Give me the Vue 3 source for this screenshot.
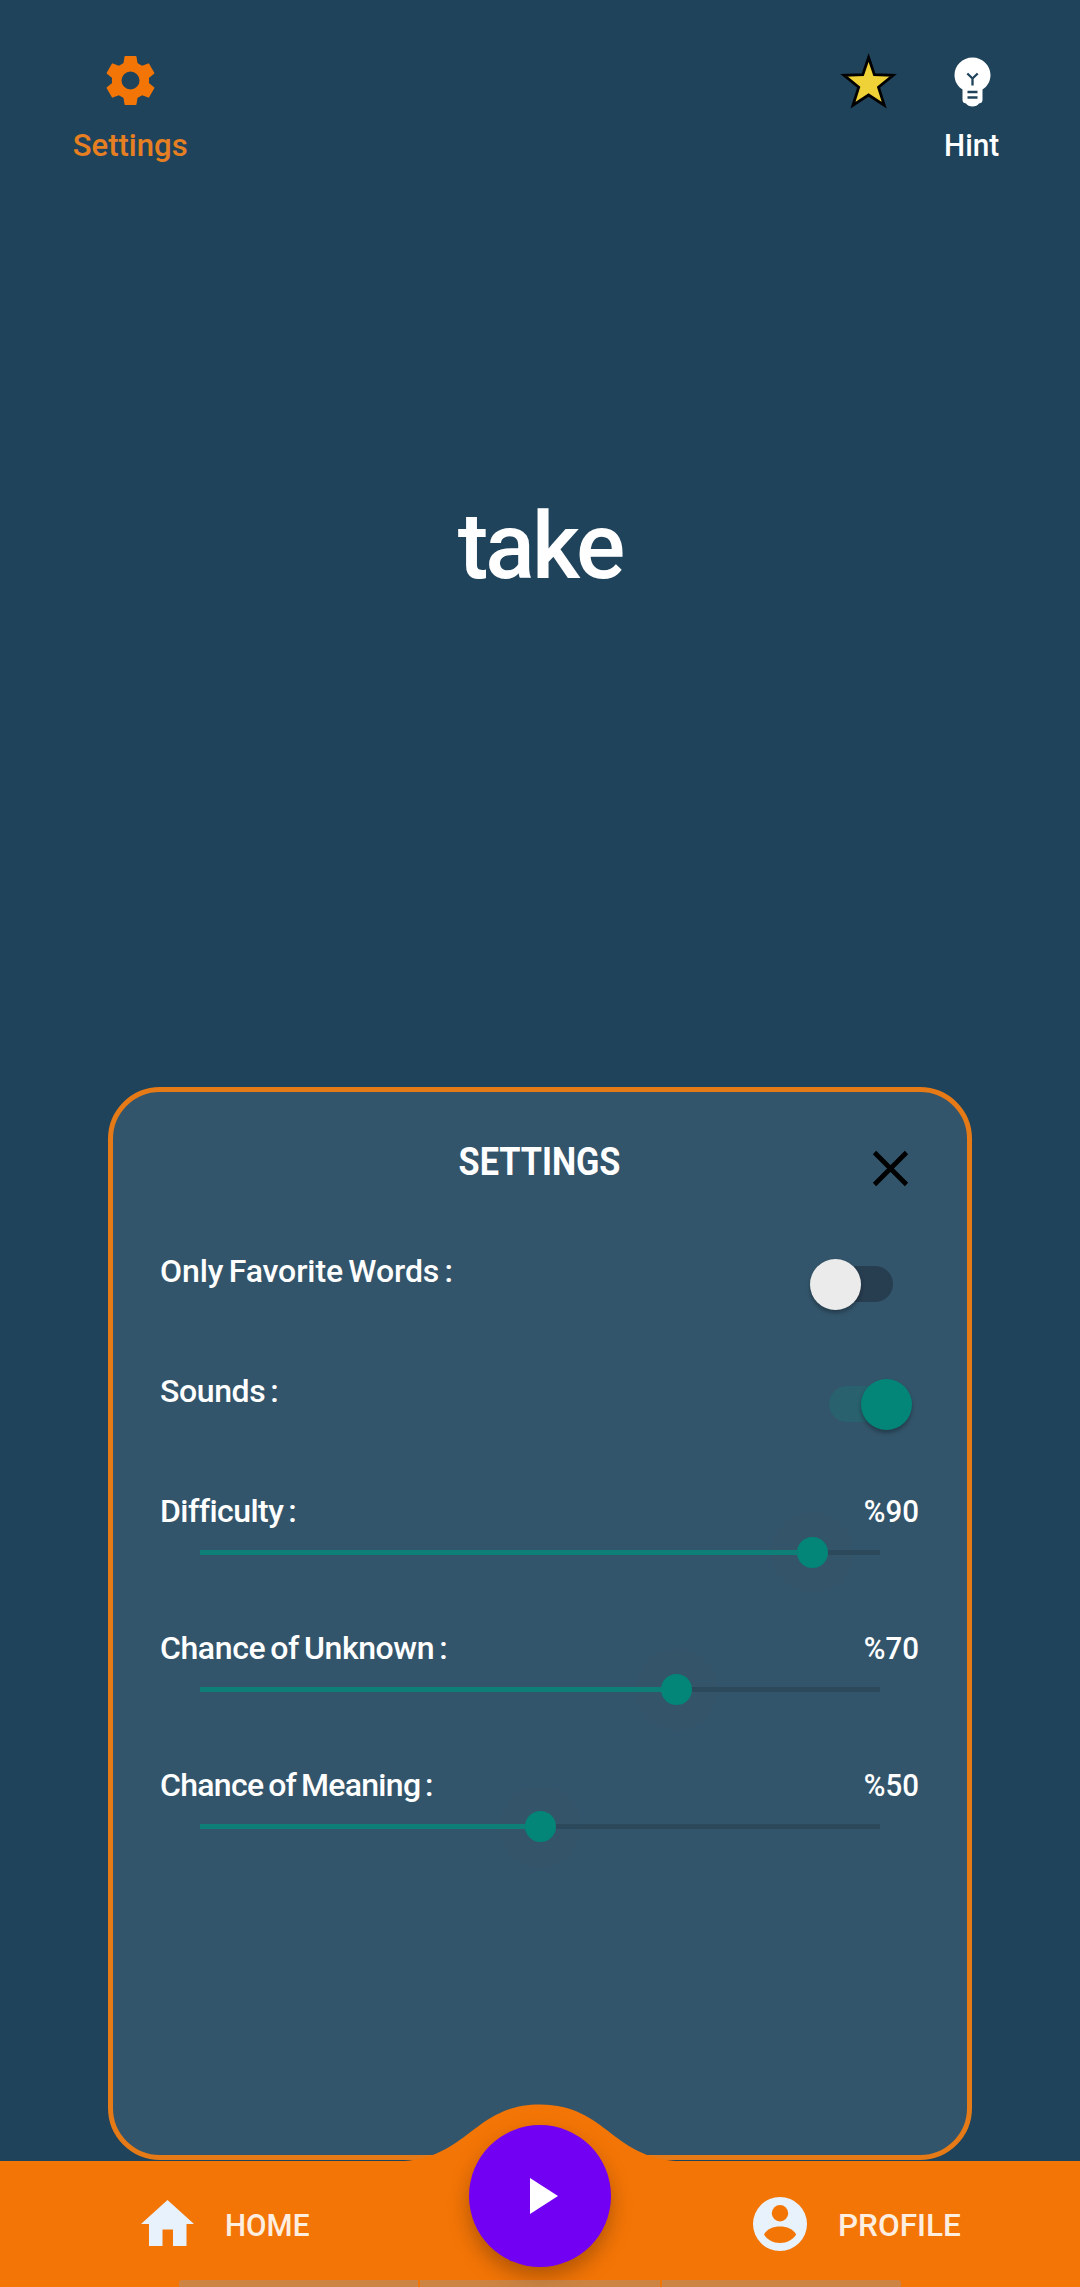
<script setup>
import { ref } from 'vue'

const teeth = [0, 60, 120, 180, 240, 300]

const toggles = ref([
  { label: 'Only Favorite Words :', key: 'fav', on: false },
  { label: 'Sounds :', key: 'snd', on: true },
])

const sliders = ref([
  { label: 'Difficulty :', key: 'dif', value: 90 },
  { label: 'Chance of Unknown :', key: 'unk', value: 70 },
  { label: 'Chance of Meaning :', key: 'mea', value: 50 },
])
</script>

<template>
  <div class="app">
    <header class="top">
      <button class="action settings">
        <svg width="59" height="59" viewBox="-29.5 -29.5 59 59" fill="currentColor">
          <circle r="13.8" fill="none" stroke="currentColor" stroke-width="9.6" />
          <path
            v-for="a in teeth"
            :key="a"
            :transform="`rotate(${a})`"
            d="M-5.2 -24.5 H5.2 Q5.9 -24.5 6 -23.8 L7 -17.5 L8.4 -15.5 H-8.4 L-7 -17.5 L-6 -23.8 Q-5.9 -24.5 -5.2 -24.5Z"
          />
        </svg>
        <span class="lbl">Settings</span>
      </button>
      <div class="top-right">
        <svg class="star" width="58" height="58" viewBox="0 0 58 58">
          <path
            d="M28.6 4.5 L34.4 21.7 L53.1 22.3 L38.5 34.2 L44.2 52.2 L28.6 42 L13 52.2 L18.7 34.2 L4.1 22.3 L22.8 21.7Z"
            fill="#efd238" stroke="#000" stroke-width="2.8" stroke-miterlimit="8"
          />
        </svg>
        <button class="action hint">
          <svg width="37" height="50" viewBox="0 0 37 50">
            <path d="M18.5 .5 C8.5 .5 .5 8.4 .5 18 C.5 24.5 3.8 29.5 8.5 32.5 V43 Q8.5 46 12 46.5 Q14 49.5 18.5 49.5 Q23 49.5 25 46.5 Q28.5 46 28.5 43 V32.5 C33.2 29.5 36.5 24.5 36.5 18 C36.5 8.4 28.5 .5 18.5 .5Z" fill="#fff" />
            <path d="M13.3 16.5 L18.5 21.5 L23.7 16.5 M18.5 21 V28.5 M13.5 35 H23.5 M13.5 40.5 H23.5" fill="none" stroke="#1e435b" stroke-width="2.3" />
          </svg>
          <span class="lbl">Hint</span>
        </button>
      </div>
    </header>

    <main class="word"><span>take</span></main>

    <section class="card">
      <div class="card-head">
        <h2>SETTINGS</h2>
        <svg class="close" width="37" height="37" viewBox="0 0 37 37">
          <path d="M2.5 2.5 L34.5 34.5 M34.5 2.5 L2.5 34.5" stroke="#000" stroke-width="4.7" />
        </svg>
      </div>

      <div v-for="t in toggles" :key="t.key" class="row toggle-row">
        <span :class="['name', t.key]">{{ t.label }}</span>
        <span :class="['switch', { on: t.on }]"><i class="knob"></i></span>
      </div>

      <div v-for="s in sliders" :key="s.key" class="row slider-row">
        <div class="line">
          <span :class="['name', s.key]">{{ s.label }}</span>
          <span class="value">%{{ s.value }}</span>
        </div>
        <div class="track">
          <div class="fill" :style="{ width: s.value + '%' }"><i class="thumb"></i></div>
        </div>
      </div>
    </section>

    <nav class="nav">
      <svg class="hump" width="320" height="60" viewBox="0 0 320 60">
        <path d="M14 57.5 C88 57.5 92 .5 160 .5 C228 .5 232 57.5 306 57.5 V60 H14Z" fill="#f37506" />
      </svg>
      <a class="tab home">
        <svg width="53" height="46" viewBox="0 0 53 46">
          <path d="M26.5 0 L53 24 H45.5 V46 H32 V29.5 H21.5 V46 H8 V24 H0Z" fill="#e8f2fd" />
        </svg>
        <span class="tab-txt">HOME</span>
      </a>
      <a class="tab profile">
        <svg width="54" height="54" viewBox="0 0 54 54">
          <circle cx="27" cy="27" r="27" fill="#e8f2fd" />
          <circle cx="27" cy="16.3" r="8.2" fill="#f37506" />
          <path d="M11 37.5 C14 32 20 29.5 27 29.5 S40 32 43.2 37.5 C39.5 43 34 46 27 46 S14.5 43 11 37.5Z" fill="#f37506" />
        </svg>
        <span class="tab-txt">PROFILE</span>
      </a>
      <button class="fab">
        <svg width="28" height="36" viewBox="0 0 28 36"><path d="M0 0 L28 18 L0 36Z" fill="#fff" /></svg>
      </button>
      <div class="strip"><i></i><i></i><i></i></div>
    </nav>
  </div>
</template>

<style>
body {
  margin: 0;
  background: #1e435b;
}
</style>

<style scoped>
.app {
  width: 1080px;
  height: 2287px;
  background: #1e435b;
  font-family: Roboto, "Liberation Sans", sans-serif;
  color: #fff;
  display: flex;
  flex-direction: column;
  overflow: hidden;
}
button {
  background: none;
  border: 0;
  padding: 0;
  margin: 0;
  color: inherit;
  font: inherit;
}
.top {
  height: 200px;
  box-sizing: border-box;
  padding: 51px 68px 0 60px;
  display: flex;
  justify-content: space-between;
}
.action {
  display: flex;
  flex-direction: column;
  align-items: center;
}
.settings {
  width: 140px;
  height: 130px;
  color: #f37506;
}
.lbl {
  font-size: 32px;
  line-height: 40px;
  font-weight: 500;
  white-space: nowrap;
  transform: scaleX(0.93);
}
.settings .lbl {
  color: #e67f22;
  margin-top: 15px;
  transform: scaleX(0.97);
}
.top-right {
  display: flex;
}
.star {
  margin: 2px 34px 0 0;
}
.hint {
  width: 80px;
  height: 130px;
  padding-top: 6px;
}
.hint .lbl {
  margin-top: 18px;
}
.word {
  height: 887px;
  box-sizing: border-box;
  padding-top: 287px;
  text-align: center;
  font-size: 92px;
  font-weight: 500;
  line-height: 120px;
}
.word span {
  display: inline-block;
  letter-spacing: -3px;
}
.card {
  flex: none;
  box-sizing: border-box;
  width: 864px;
  height: 1073px;
  margin: 0 108px;
  border: 5px solid #e67a16;
  border-radius: 52px;
  background: #33556b;
  padding: 46px 48px 0 47px;
}
.card-head {
  position: relative;
  height: 107px;
}
h2 {
  margin: 0;
  text-align: center;
  font-size: 38px;
  line-height: 48px;
  font-weight: 700;
  transform: scaleX(0.9);
}
.close {
  position: absolute;
  top: 12px;
  right: 10px;
}
.row {
  box-sizing: border-box;
  padding-top: 6px;
  white-space: nowrap;
}
.name,
.value {
  font-size: 32px;
  line-height: 40px;
  font-weight: 500;
}
.name {
  word-spacing: -2.5px;
}
.fav {
  letter-spacing: -0.1px;
}
.snd {
  letter-spacing: -0.4px;
}
.dif {
  letter-spacing: -0.55px;
}
.unk {
  letter-spacing: -0.4px;
}
.mea {
  letter-spacing: -0.7px;
}
.value {
  transform-origin: 100% 50%;
  transform: scaleX(0.92);
}
.toggle-row {
  height: 120px;
  display: flex;
  justify-content: space-between;
  align-items: flex-start;
}
.switch {
  position: relative;
  width: 78px;
  height: 36px;
  margin: 15px 26px 0 0;
  border-radius: 18px;
  background: #273d50;
}
.knob {
  position: absolute;
  top: -7.5px;
  left: -5.5px;
  width: 51px;
  height: 51px;
  border-radius: 50%;
  background: #ebebeb;
  box-shadow: 0 3px 4px rgba(0, 0, 0, 0.3);
}
.switch.on {
  background: #29616e;
  margin-right: 12.5px;
}
.switch.on .knob {
  left: 32.5px;
  background: #038577;
}
.slider-row {
  height: 137px;
  isolation: isolate;
}
.line {
  display: flex;
  justify-content: space-between;
}
.track {
  width: 680px;
  height: 5px;
  margin: 19px 0 0 40px;
  background: #2c485b;
}
.fill {
  position: relative;
  height: 5px;
  background: #0d7f76;
}
.thumb {
  position: absolute;
  right: -15.5px;
  top: -13px;
  width: 31px;
  height: 31px;
  border-radius: 50%;
  background: #038577;
}
.thumb::before {
  content: "";
  position: absolute;
  inset: -25px;
  border-radius: 50%;
  background: rgba(58, 78, 106, 0.2);
  z-index: -1;
}
.nav {
  position: relative;
  flex: none;
  display: flex;
  height: 126px;
  margin-top: 1px;
  background: #f37506;
}
.hump {
  position: absolute;
  left: 380px;
  top: -57px;
}
.tab {
  display: flex;
  align-items: center;
  box-sizing: border-box;
  height: 126px;
  padding-left: 141px;
  font-size: 32px;
  font-weight: 500;
}
.home {
  width: 612px;
}
.home svg {
  margin: -2px 31px 0 0;
}
.profile svg {
  margin-right: 31px;
}
.tab-txt {
  color: #fdeee0;
  line-height: 40px;
  margin-top: 2px;
  transform-origin: 0 50%;
  transform: scaleX(0.93);
}
.profile .tab-txt {
  transform: scaleX(0.985);
}
.fab {
  position: absolute;
  left: 469px;
  top: -36px;
  width: 142px;
  height: 142px;
  border-radius: 50%;
  background: #7200f3;
  box-shadow: 0 10px 20px rgba(60, 30, 0, 0.36);
  display: flex;
  align-items: center;
  justify-content: center;
  padding-left: 8px;
}
.strip {
  position: absolute;
  left: 179px;
  bottom: 0;
  width: 722px;
  height: 7px;
  display: flex;
  gap: 2px;
}
.strip i {
  flex: 1;
  background: rgba(160, 150, 140, 0.45);
}
.strip i:first-child {
  border-top-left-radius: 3px;
}
.strip i:last-child {
  border-top-right-radius: 3px;
}
</style>
